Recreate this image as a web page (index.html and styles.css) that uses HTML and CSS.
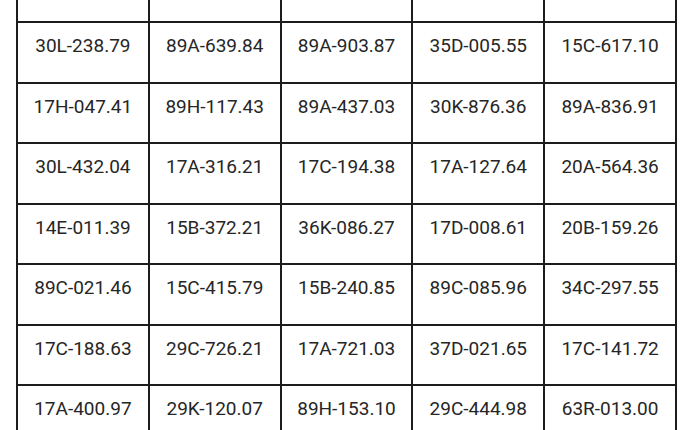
FILE: index.html
```html
<!DOCTYPE html>
<html>
<head>
<meta charset="utf-8">
<link rel="stylesheet" href="styles.css">
</head>
<body>
<table class="grid">
  <tr class="cut"><td></td><td></td><td></td><td></td><td></td></tr>
  <tr class="a"><td>30L-238.79</td><td>89A-639.84</td><td>89A-903.87</td><td>35D-005.55</td><td>15C-617.10</td></tr>
  <tr class="b"><td>17H-047.41</td><td>89H-117.43</td><td>89A-437.03</td><td>30K-876.36</td><td>89A-836.91</td></tr>
  <tr class="a"><td>30L-432.04</td><td>17A-316.21</td><td>17C-194.38</td><td>17A-127.64</td><td>20A-564.36</td></tr>
  <tr class="b"><td>14E-011.39</td><td>15B-372.21</td><td>36K-086.27</td><td>17D-008.61</td><td>20B-159.26</td></tr>
  <tr class="a"><td>89C-021.46</td><td>15C-415.79</td><td>15B-240.85</td><td>89C-085.96</td><td>34C-297.55</td></tr>
  <tr class="b"><td>17C-188.63</td><td>29C-726.21</td><td>17A-721.03</td><td>37D-021.65</td><td>17C-141.72</td></tr>
  <tr class="a"><td>17A-400.97</td><td>29K-120.07</td><td>89H-153.10</td><td>29C-444.98</td><td>63R-013.00</td></tr>
</table>
</body>
</html>
```
FILE: styles.css
```css
html, body {
  margin: 0;
  padding: 0;
  background: #ffffff;
  overflow: hidden;
}
.grid {
  margin-left: 16px;
  width: 661px;
  table-layout: fixed;
  border-collapse: collapse;
  font-family: Roboto, "Noto Sans", sans-serif;
  font-size: 19px;
  color: #262626;
}
.grid td {
  border: 2px solid #1c1c1c;
  text-align: center;
  vertical-align: top;
  padding: 11px 0 0 0;
  box-sizing: border-box;
  white-space: nowrap;
}
.grid .cut td {
  border-top: none;
  height: 22px;
  padding: 0;
}
.grid .a td {
  height: 61px;
}
.grid .b td {
  height: 60px;
}
```
